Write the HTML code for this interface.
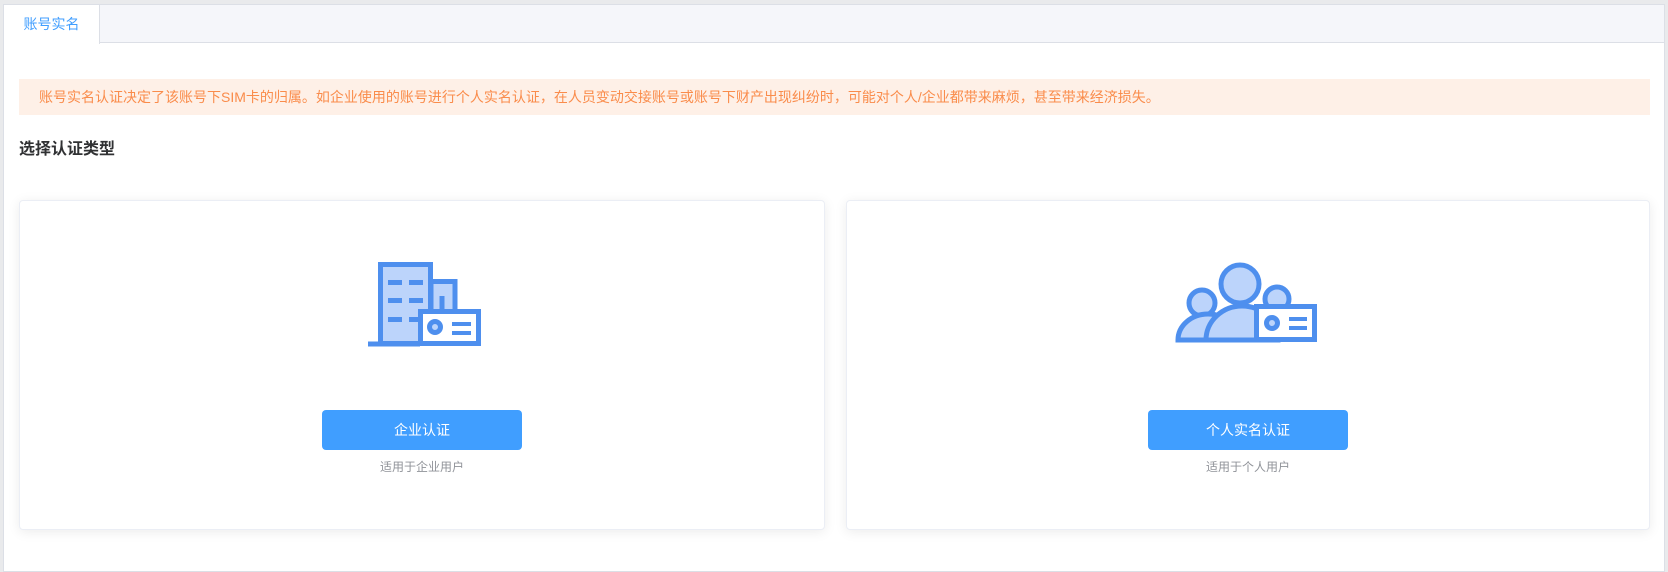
<!DOCTYPE html>
<html><head><meta charset="utf-8"><style>
*{margin:0;padding:0;box-sizing:border-box}
body{width:1668px;height:572px;background:#e9eaec;font-family:"Liberation Sans","Noto Sans CJK SC",sans-serif;position:relative;overflow:hidden}
.frame{position:absolute;left:3px;top:4px;width:1662px;height:568px;background:#fff;border:1px solid #dcdfe6}
.tabbar{position:absolute;left:3px;top:4px;width:1662px;height:39px;background:#f5f6fa;border:1px solid #dcdfe6;border-bottom:1px solid #dcdfe6}
.tab{position:absolute;left:3px;top:4px;width:97px;height:40px;background:#fff;border:1px solid #dcdfe6;border-bottom:none;color:#409eff;font-size:14px;line-height:38px;text-align:center}
.banner{position:absolute;left:19px;top:79px;width:1631px;height:36px;background:#fef0e7;color:#fa8c4b;font-size:14px;line-height:36px;padding-left:20px;white-space:nowrap}
.title{position:absolute;left:19px;top:135px;font-size:16px;color:#303133;font-weight:bold}
.card{position:absolute;top:200px;height:330px;background:#fff;border:1px solid #ebeef5;border-radius:4px;box-shadow:0 2px 12px rgba(0,0,0,.08)}
.btn{position:absolute;top:209px;width:200px;height:40px;background:#409eff;border-radius:4px;color:#fff;font-size:14px;text-align:center;line-height:40px;left:50%;margin-left:-100px}
.sub{position:absolute;top:257px;width:100%;text-align:center;font-size:12px;color:#909399}
svg{position:absolute;left:0;top:0}
</style></head><body>
<div class="frame"></div>
<div class="tabbar"></div>
<div class="tab">账号实名</div>
<div class="banner">账号实名认证决定了该账号下SIM卡的归属。如企业使用的账号进行个人实名认证，在人员变动交接账号或账号下财产出现纠纷时，可能对个人/企业都带来麻烦，甚至带来经济损失。</div>
<div class="title">选择认证类型</div>
<div class="card" style="left:19px;width:806px"><div class="btn">企业认证</div><div class="sub">适用于企业用户</div></div>
<div class="card" style="left:846px;width:804px"><div class="btn">个人实名认证</div><div class="sub">适用于个人用户</div></div>
<svg width="1668" height="572" viewBox="0 0 1668 572">
<g stroke="#4e8fee" stroke-width="5" fill="#bcd4fb">
<rect x="431" y="281.5" width="24" height="62"/>
<rect x="380.5" y="264.5" width="50" height="79"/>
<line x1="368" y1="344" x2="420" y2="344"/>
<line x1="442" y1="296" x2="442" y2="312"/>
<rect x="420.5" y="311.5" width="58" height="32" fill="#fff"/>
<circle cx="435" cy="327" r="5.5"/>
</g>
<g fill="#4e8fee">
<rect x="388" y="280" width="14" height="5"/><rect x="409" y="280" width="14" height="5"/>
<rect x="388" y="298" width="14" height="5"/><rect x="409" y="298" width="14" height="5"/>
<rect x="388" y="317" width="14" height="5"/><rect x="409" y="317" width="10" height="5"/>
<rect x="452" y="322" width="19" height="4"/><rect x="452" y="331" width="19" height="4"/>
</g>
<g stroke="#4e8fee" stroke-width="5" fill="#bcd4fb">
<circle cx="1277" cy="299" r="12"/>
<circle cx="1202" cy="303" r="13"/>
<path d="M1178 340 A30 26 0 0 1 1238 340 Z"/>
<circle cx="1240" cy="284" r="19"/>
<path d="M1206 340 A36 34 0 0 1 1278 340 Z"/>
<rect x="1256.5" y="306.5" width="58" height="33" fill="#fff"/>
<circle cx="1272" cy="323" r="5.5"/>
</g>
<g fill="#4e8fee"><rect x="1289" y="317" width="18" height="4"/><rect x="1289" y="326" width="18" height="4"/></g>
</svg>
</body></html>
